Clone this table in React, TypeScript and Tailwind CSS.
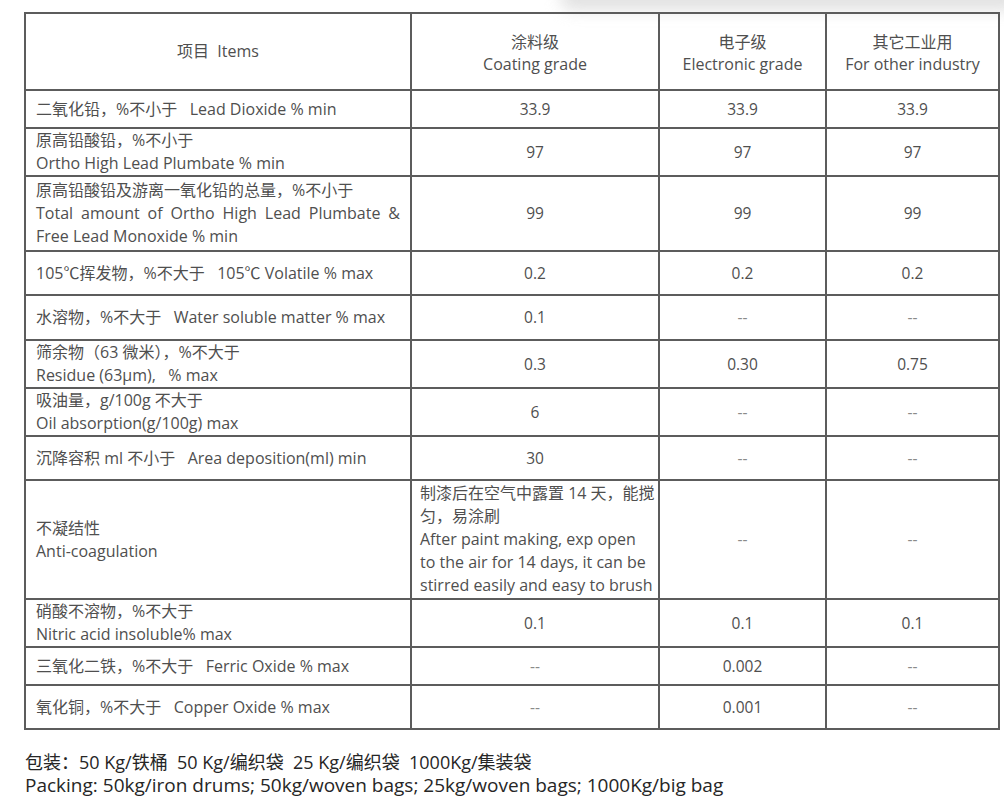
import React from "react";

type Row = {
  h: number;
  left: React.ReactNode;
  vals: React.ReactNode[];
};

const Dash = () => <span className="text-[#8a8a8a]">--</span>;

const rows: Row[] = [
  { h: 38, left: <div>二氧化铅，%不小于&nbsp;&nbsp;&nbsp;Lead Dioxide % min</div>, vals: ["33.9", "33.9", "33.9"] },
  {
    h: 48,
    left: (
      <div>
        <div>原高铅酸铅，%不小于</div>
        <div>Ortho High Lead Plumbate % min</div>
      </div>
    ),
    vals: ["97", "97", "97"],
  },
  {
    h: 75,
    left: (
      <div>
        <div>原高铅酸铅及游离一氧化铅的总量，%不小于</div>
        <div className="text-justify">Total amount of Ortho High Lead Plumbate &amp; Free Lead Monoxide % min</div>
      </div>
    ),
    vals: ["99", "99", "99"],
  },
  { h: 44, left: <div>105℃挥发物，%不大于&nbsp;&nbsp;&nbsp;105℃ Volatile % max</div>, vals: ["0.2", "0.2", "0.2"] },
  { h: 45, left: <div>水溶物，%不大于&nbsp;&nbsp;&nbsp;Water soluble matter % max</div>, vals: ["0.1", <Dash />, <Dash />] },
  {
    h: 48,
    left: (
      <div>
        <div>筛余物（63 微米），%不大于</div>
        <div>Residue (63μm),&nbsp;&nbsp;&nbsp;% max</div>
      </div>
    ),
    vals: ["0.3", "0.30", "0.75"],
  },
  {
    h: 47,
    left: (
      <div>
        <div>吸油量，g/100g 不大于</div>
        <div>Oil absorption(g/100g) max</div>
      </div>
    ),
    vals: ["6", <Dash />, <Dash />],
  },
  { h: 44, left: <div>沉降容积 ml 不小于&nbsp;&nbsp;&nbsp;Area deposition(ml) min</div>, vals: ["30", <Dash />, <Dash />] },
  {
    h: 119,
    left: (
      <div>
        <div>不凝结性</div>
        <div>Anti-coagulation</div>
      </div>
    ),
    vals: [
      <div className="text-left pl-[8px] whitespace-nowrap text-[16px]">
        <div>制漆后在空气中露置 14 天，能搅</div>
        <div>匀，易涂刷</div>
        <div>After paint making, exp open</div>
        <div>to the air for 14 days, it can be</div>
        <div>stirred easily and easy to brush</div>
      </div>,
      <Dash />,
      <Dash />,
    ],
  },
  {
    h: 48,
    left: (
      <div>
        <div>硝酸不溶物，%不大于</div>
        <div>Nitric acid insoluble% max</div>
      </div>
    ),
    vals: ["0.1", "0.1", "0.1"],
  },
  { h: 38, left: <div>三氧化二铁，%不大于&nbsp;&nbsp;&nbsp;Ferric Oxide % max</div>, vals: [<Dash />, "0.002", <Dash />] },
  { h: 44, left: <div>氧化铜，%不大于&nbsp;&nbsp;&nbsp;Copper Oxide % max</div>, vals: [<Dash />, "0.001", <Dash />] },
];

export default function App() {
  const font = { fontFamily: '"Open Sans", "Noto Sans CJK SC", sans-serif' };
  return (
    <div className="relative w-[1004px] h-[806px] bg-white overflow-hidden text-[#4f4f4f]" style={font}>
      <div className="absolute top-[-14px] left-[560px] w-[460px] h-[24px] rounded-full bg-[#d9d9d9] blur-[8px] opacity-80" />
      <div className="relative pt-[12px] pl-[24px]">
        <table className="table-fixed border-collapse w-[974px] border-2 border-[#5c5c5c] text-[16px] leading-[23px]">
          <colgroup>
            <col className="w-[386px]" />
            <col className="w-[248px]" />
            <col className="w-[167px]" />
            <col className="w-[173px]" />
          </colgroup>
          <thead>
            <tr className="h-[77px]">
              <th className="border-2 border-[#5c5c5c] font-normal text-[16px] text-center align-middle">项目&nbsp; Items</th>
              <th className="border-2 border-[#5c5c5c] font-normal text-[16px] text-center align-middle leading-[22px] pt-[3px]">
                <div>涂料级</div>
                <div>Coating grade</div>
              </th>
              <th className="border-2 border-[#5c5c5c] font-normal text-[16px] text-center align-middle leading-[22px] pt-[3px]">
                <div>电子级</div>
                <div>Electronic grade</div>
              </th>
              <th className="border-2 border-[#5c5c5c] font-normal text-[16px] text-center align-middle leading-[22px] pt-[3px]">
                <div>其它工业用</div>
                <div>For other industry</div>
              </th>
            </tr>
          </thead>
          <tbody>
            {rows.map((r, i) => (
              <tr key={i} style={{ height: r.h }}>
                <td className="border-2 border-[#5c5c5c] pl-[10px] pr-[10px] align-middle">{r.left}</td>
                {r.vals.map((v, j) => (
                  <td key={j} className="border-2 border-[#5c5c5c] text-center align-middle text-[15.5px]">
                    {v}
                  </td>
                ))}
              </tr>
            ))}
          </tbody>
        </table>
      </div>
      <div className="pl-[25px] pt-[21px] leading-[23px] text-[#262626]">
        <div className="text-[18px]">包装：50 Kg/铁桶&nbsp;&nbsp;50 Kg/编织袋&nbsp;&nbsp;25 Kg/编织袋&nbsp;&nbsp;1000Kg/集装袋</div>
        <div className="text-[19px]">Packing: 50kg/iron drums; 50kg/woven bags; 25kg/woven bags; 1000Kg/big bag</div>
      </div>
    </div>
  );
}
